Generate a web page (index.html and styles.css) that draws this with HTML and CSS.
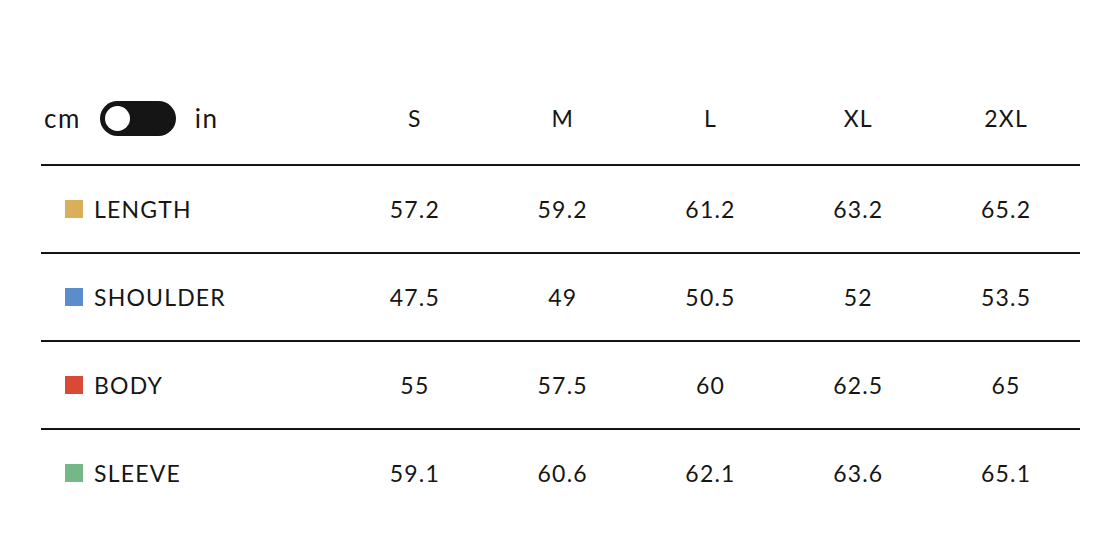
FILE: index.html
```html
<!DOCTYPE html>
<html>
<head>
<meta charset="utf-8">
<link rel="stylesheet" href="styles.css">
</head>
<body>
<div class="chart">
  <div class="row head">
    <div class="label units">
      <span>cm</span>
      <span class="toggle"><span class="knob"></span></span>
      <span>in</span>
    </div>
    <div class="cell">S</div>
    <div class="cell">M</div>
    <div class="cell">L</div>
    <div class="cell">XL</div>
    <div class="cell">2XL</div>
  </div>
  <div class="row">
    <div class="label"><span class="sw gold"></span>LENGTH</div>
    <div class="cell">57.2</div>
    <div class="cell">59.2</div>
    <div class="cell">61.2</div>
    <div class="cell">63.2</div>
    <div class="cell">65.2</div>
  </div>
  <div class="row">
    <div class="label"><span class="sw blue"></span>SHOULDER</div>
    <div class="cell">47.5</div>
    <div class="cell">49</div>
    <div class="cell">50.5</div>
    <div class="cell">52</div>
    <div class="cell">53.5</div>
  </div>
  <div class="row">
    <div class="label"><span class="sw red"></span>BODY</div>
    <div class="cell">55</div>
    <div class="cell">57.5</div>
    <div class="cell">60</div>
    <div class="cell">62.5</div>
    <div class="cell">65</div>
  </div>
  <div class="row last">
    <div class="label"><span class="sw green"></span>SLEEVE</div>
    <div class="cell">59.1</div>
    <div class="cell">60.6</div>
    <div class="cell">62.1</div>
    <div class="cell">63.6</div>
    <div class="cell">65.1</div>
  </div>
</div>
</body>
</html>
```

FILE: styles.css
```css
html, body {
  margin: 0;
  padding: 0;
  background: #fff;
}
body {
  font-family: "Lato", "Noto Sans", sans-serif;
  color: #161616;
}
.chart {
  width: 1039px;
  margin: 78px 0 0 41px;
}
.row {
  display: grid;
  grid-template-columns: 300px repeat(5, 1fr);
  height: 86px;
  align-items: center;
  border-bottom: 2px solid #141414;
  font-size: 23px;
  letter-spacing: 1.2px;
}
.row.head {
  height: 80px;
  padding-bottom: 6px;
}
.row.last {
  border-bottom: none;
}
.cell {
  text-align: center;
}
.label {
  display: flex;
  align-items: center;
  padding-left: 24px;
}
.units {
  padding-left: 3px;
  gap: 19px;
  font-size: 26px;
  letter-spacing: 1.5px;
}
.toggle {
  display: flex;
  align-items: center;
  width: 76px;
  height: 35px;
  border-radius: 18px;
  background: #151515;
  padding: 0 5px;
  box-sizing: border-box;
}
.knob {
  width: 25px;
  height: 25px;
  border-radius: 50%;
  background: #fff;
}
.sw {
  width: 18px;
  height: 18px;
  margin-right: 11px;
  flex: none;
}
.gold { background: #d9b05a; }
.blue { background: #5b8ccb; }
.red { background: #d84a35; }
.green { background: #74b888; }
```
